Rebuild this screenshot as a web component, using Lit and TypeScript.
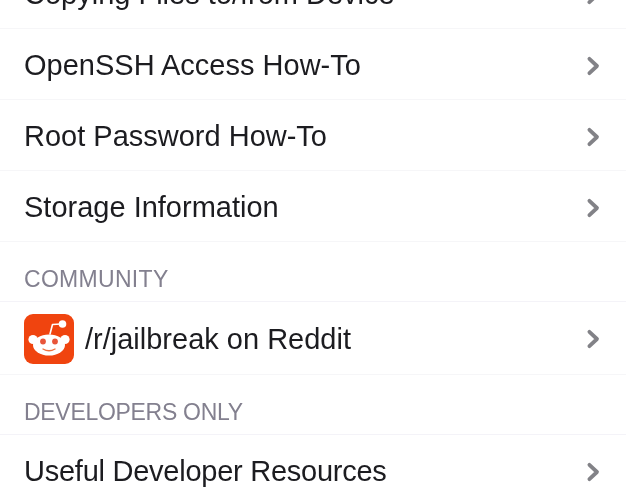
import { LitElement, html, css, svg } from "lit";
import { customElement } from "lit/decorators.js";

const chevron = html`<svg class="chev" viewBox="0 0 16 22" width="16" height="22" aria-hidden="true">
  <path d="M3.4 3.8 L11 11 L3.4 18.2" fill="none" stroke="#828287" stroke-width="3.8" stroke-linecap="round" stroke-linejoin="round"/>
</svg>`;

const reddit = html`<svg class="logo" viewBox="0 0 50 50" width="50" height="50" aria-hidden="true">
  <rect x="0" y="0" width="50" height="50" rx="9" fill="#f0440f"/>
  ${svg`
    <path d="M26 20 L28.5 10.5 L37 10" fill="none" stroke="#fff" stroke-width="1.6" stroke-linecap="round" stroke-linejoin="round"/>
    <circle cx="38.5" cy="10" r="3.8" fill="#fff"/>
    <circle cx="9" cy="25.5" r="4.6" fill="#fff"/>
    <circle cx="41" cy="25.5" r="4.6" fill="#fff"/>
    <ellipse cx="25" cy="31" rx="16" ry="10.5" fill="#fff"/>
    <circle cx="19" cy="27.5" r="2.9" fill="#e8553a"/>
    <circle cx="31" cy="27.5" r="2.9" fill="#e8553a"/>
    <path d="M19 35 Q25 38.5 31 35" fill="none" stroke="#f0703f" stroke-width="1.4" stroke-linecap="round"/>
  `}
</svg>`;

@customElement("app-root")
export class AppRoot extends LitElement {
  static styles = css`
    :host {
      display: block;
      width: 626px;
      height: 490px;
      overflow: hidden;
      background: #fff;
      font-family: "Liberation Sans", Arial, sans-serif;
      color: #1c1c20;
    }
    .list {
      margin-top: -42px;
      filter: blur(0.35px);
    }
    .row {
      display: flex;
      align-items: center;
      height: 71px;
      padding: 3px 24px 0;
      font-size: 29px;
      border-bottom: 1px solid #f6f6f8;
      box-sizing: border-box;
    }
    .row.logo-row {
      height: 73px;
      padding-top: 2px;
    }
    .row.tight {
      letter-spacing: -0.25px;
    }
    .row span {
      flex: 1;
    }
    .logo {
      margin-right: 11px;
      flex: none;
    }
    .chev {
      flex: none;
    }
    .head {
      display: flex;
      align-items: flex-end;
      height: 60px;
      padding: 0 24px 8px;
      box-sizing: border-box;
      font-size: 23px;
      color: #83808f;
      border-bottom: 1px solid #f4f3f8;
    }
    .head.wide {
      letter-spacing: 0.3px;
    }
    .head.narrow {
      letter-spacing: -0.3px;
    }
  `;

  render() {
    return html`<div class="list">
      <div class="row"><span>Copying Files to/from Device</span>${chevron}</div>
      <div class="row"><span>OpenSSH Access How-To</span>${chevron}</div>
      <div class="row"><span>Root Password How-To</span>${chevron}</div>
      <div class="row"><span>Storage Information</span>${chevron}</div>
      <div class="head wide">COMMUNITY</div>
      <div class="row logo-row">${reddit}<span>/r/jailbreak on Reddit</span>${chevron}</div>
      <div class="head narrow">DEVELOPERS ONLY</div>
      <div class="row tight"><span>Useful Developer Resources</span>${chevron}</div>
    </div>`;
  }
}
